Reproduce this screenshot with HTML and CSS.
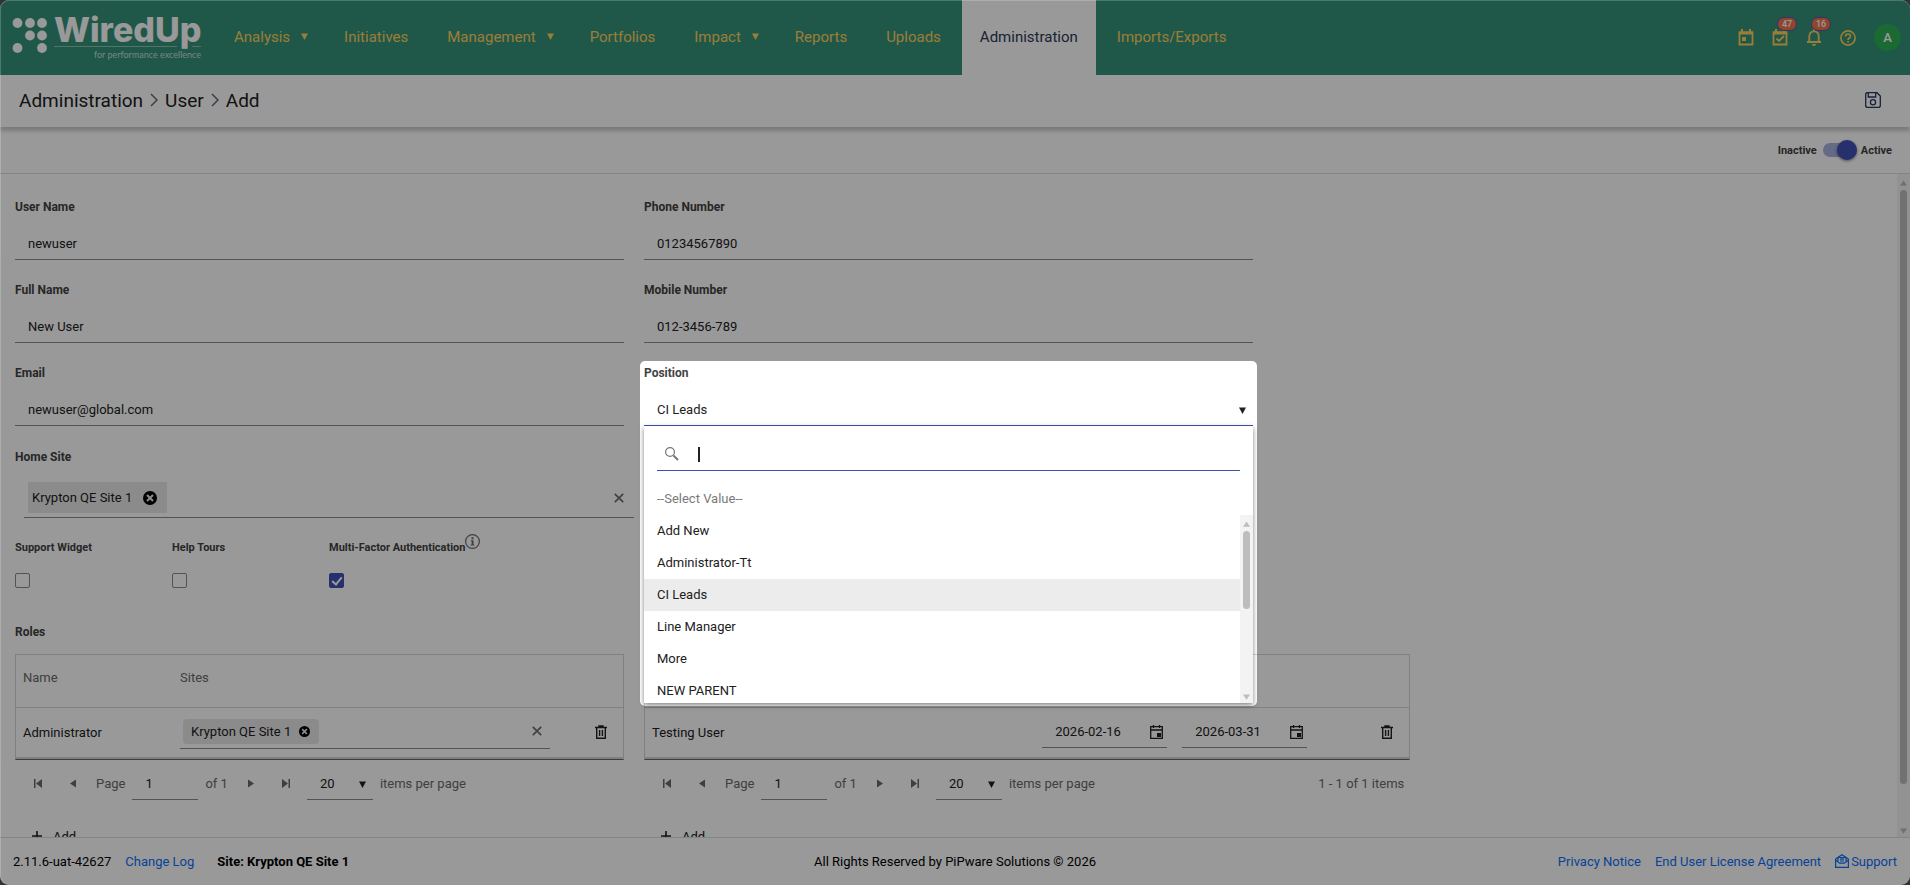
FILE: index.html
```html
<!DOCTYPE html>
<html lang="en">
<head>
  <meta charset="UTF-8">
  <meta name="viewport" content="width=device-width, initial-scale=1.0">
  <title>Administration - User - Add</title>
  <link rel="stylesheet" href="styles.css">
</head>
<body>
  <!-- shared icons -->
  <svg class="sprite" width="0" height="0" aria-hidden="true">
    <symbol id="caret" viewBox="0 0 8 8"><path d="M0 0.5h8L4 8z"/></symbol>
    <symbol id="arrow-up" viewBox="0 0 8 6"><path d="M0 6h8L4 0z"/></symbol>
    <symbol id="arrow-down" viewBox="0 0 8 6"><path d="M0 0h8L4 6z"/></symbol>
    <symbol id="chevron" viewBox="0 0 8 14"><path d="M1 1l6 6-6 6" fill="none" stroke="currentColor" stroke-width="1.5"/></symbol>
    <symbol id="cross" viewBox="0 0 10 10"><path d="M0.8 0.8l8.4 8.4M9.2 0.8L0.8 9.2" fill="none" stroke="currentColor" stroke-width="1.8"/></symbol>
    <symbol id="cross-circle" viewBox="0 0 14 14"><circle cx="7" cy="7" r="7"/><path d="M4 4l6 6M10 4l-6 6" fill="none" stroke="#ececec" stroke-width="2"/></symbol>
    <symbol id="trash" viewBox="0 0 12 14"><path d="M0 2.5h12M4 2.5V1h4v1.5M1.7 2.5v10.8h8.6V2.5M4.6 5v6M7.4 5v6" fill="none" stroke="currentColor" stroke-width="1.4"/></symbol>
    <symbol id="date" viewBox="0 0 13 14"><path d="M.7 1.7h11.6v11.6H.7zM.7 5h11.6M3.5 0v3M9.5 0v3" fill="none" stroke="currentColor" stroke-width="1.3"/><path d="M7 8h4v4H7z"/></symbol>
    <symbol id="first" viewBox="0 0 8 9"><path d="M0 0h1.5v9H0zM8 0v9L2 4.500z"/></symbol>
    <symbol id="prev" viewBox="0 0 8 9"><path d="M7 .5v8L1 4.500z"/></symbol>
    <symbol id="next" viewBox="0 0 8 9"><path d="M1 .5v8l6-4z"/></symbol>
    <symbol id="last" viewBox="0 0 8 9"><path d="M8 0H6.500v9H8zM0 0v9l6-4.500z"/></symbol>
    <symbol id="plus" viewBox="0 0 10 10"><path d="M4.200 0h1.600v4.200H10v1.600H5.800V10H4.200V5.800H0V4.200h4.200z"/></symbol>
  </svg>

  <div class="app">
    <header class="header">
      <a class="brand" href="#" aria-label="WiredUp">
        <svg width="204" height="62" viewBox="0 0 204 62">
          <g fill="#fff">
            <circle cx="17.500" cy="23" r="4.900"/><circle cx="30" cy="23" r="4.900"/><circle cx="42" cy="23" r="4.900"/>
            <circle cx="30" cy="35.500" r="4.900"/><circle cx="42" cy="35.500" r="4.900"/>
            <circle cx="17.500" cy="48" r="4.900"/><circle cx="42" cy="48" r="4.900"/>
          </g>
          <text class="brand-name" x="54" y="42">WiredUp</text>
          <path d="M54 46.500h123M192 46.500h9" stroke="#90bfb0" stroke-width="1"/>
          <text class="brand-tag" x="201" y="58" text-anchor="end">for performance excellence</text>
        </svg>
      </a>
      <nav class="nav">
        <a href="#">Analysis <svg class="nav-caret"><use href="#caret"/></svg></a>
        <a href="#">Initiatives</a>
        <a href="#">Management <svg class="nav-caret"><use href="#caret"/></svg></a>
        <a href="#">Portfolios</a>
        <a href="#">Impact <svg class="nav-caret"><use href="#caret"/></svg></a>
        <a href="#">Reports</a>
        <a href="#">Uploads</a>
        <a href="#" class="active">Administration</a>
        <a href="#">Imports/Exports</a>
      </nav>
      <div class="header-tools">
        <button type="button" class="tool" aria-label="Calendar">
          <svg width="16" height="17" viewBox="0 0 16 17"><path d="M1.500 3.500h13v12h-13z" fill="none" stroke="currentColor" stroke-width="1.800"/><path d="M1 2.500h14v3H1zM3 0h2v3H3zM11 0h2v3h-2zM4 8h4v4H4z"/></svg>
        </button>
        <button type="button" class="tool" aria-label="Tasks">
          <svg width="16" height="17" viewBox="0 0 16 17"><path d="M1.500 3.500h13v12h-13zM4.500 9.500l2.500 2.500 5-5" fill="none" stroke="currentColor" stroke-width="1.800"/><path d="M1 2.500h14v3H1zM3 0h2v3H3zM11 0h2v3h-2z"/></svg>
          <span class="badge">47</span>
        </button>
        <button type="button" class="tool" aria-label="Notifications">
          <svg width="16" height="17" viewBox="0 0 16 17"><path d="M1 13h14M3.300 13V7.500C3.300 4 5.300 2.300 8 2.300s4.700 1.700 4.700 5.200V13" fill="none" stroke="currentColor" stroke-width="1.800"/><path d="M7 0h2v2.500H7zM6 15h4a2 2 0 0 1-4 0z"/></svg>
          <span class="badge">16</span>
        </button>
        <button type="button" class="tool" aria-label="Help">
          <svg width="16" height="16" viewBox="0 0 16 16"><circle cx="8" cy="8" r="7.100" fill="none" stroke="currentColor" stroke-width="1.700"/><path d="M5.500 6.500C5.500 5 6.600 4 8 4s2.500 1 2.500 2.300C10.500 8 8 8 8 10" fill="none" stroke="currentColor" stroke-width="1.600"/><path d="M7.200 11h1.700v1.600H7.200z"/></svg>
        </button>
        <button type="button" class="avatar">A</button>
      </div>
    </header>

    <div class="breadcrumb-bar">
      <nav class="breadcrumb" aria-label="Breadcrumb">
        <a href="#">Administration</a>
        <svg><use href="#chevron"/></svg>
        <a href="#">User</a>
        <svg><use href="#chevron"/></svg>
        <a href="#">Add</a>
      </nav>
      <button type="button" class="save" aria-label="Save">
        <svg width="16" height="16" viewBox="0 0 16 16" fill="none" stroke="currentColor" stroke-width="1.300"><path d="M1.700.7H12L15.300 4v10.300l-1 1H1.700l-1-1V1.700zM3.300.700v4.300h7.400V.700"/><circle cx="8" cy="10.300" r="2.600"/></svg>
      </button>
    </div>

    <div class="status-bar">
      <label class="switch">
        <span>Inactive</span>
        <input type="checkbox" checked>
        <span>Active</span>
      </label>
    </div>

    <div class="content">
      <form class="form">
        <div class="fields">
          <div class="field">
            <label for="username">User Name</label>
            <input type="text" id="username" value="newuser">
          </div>
          <div class="field">
            <label for="phone">Phone Number</label>
            <input type="text" id="phone" value="01234567890">
          </div>
          <div class="field">
            <label for="fullname">Full Name</label>
            <input type="text" id="fullname" value="New User">
          </div>
          <div class="field">
            <label for="mobile">Mobile Number</label>
            <input type="text" id="mobile" value="012-3456-789">
          </div>
          <div class="field">
            <label for="email">Email</label>
            <input type="text" id="email" value="newuser@global.com">
          </div>
          <div class="field position-field">
            <div class="spotlight"></div>
            <label for="position">Position</label>
            <div class="select-wrap">
              <select id="position"><option>CI Leads</option></select>
              <svg class="select-caret"><use href="#caret"/></svg>
            </div>
            <div class="popup">
              <div class="search">
                <svg width="14" height="14" viewBox="0 0 14 14" fill="none" stroke="#777"><circle cx="5" cy="5" r="4.400" stroke-width="1.200"/><path d="M8.500 8.500l4.500 4.500" stroke-width="2"/></svg>
                <span class="text-cursor"></span>
                <input type="text" aria-label="Search positions">
              </div>
              <div class="option placeholder">--Select Value--</div>
              <div class="option-area">
                <ul class="options" role="listbox" aria-label="Position">
                  <li class="option" role="option">Add New</li>
                  <li class="option" role="option">Administrator-Tt</li>
                  <li class="option selected" role="option" aria-selected="true">CI Leads</li>
                  <li class="option" role="option">Line Manager</li>
                  <li class="option" role="option">More</li>
                  <li class="option" role="option">NEW PARENT</li>
                </ul>
                <div class="scrollbar popup-scrollbar" aria-hidden="true">
                  <svg><use href="#arrow-up"/></svg>
                  <div class="thumb"></div>
                  <svg><use href="#arrow-down"/></svg>
                </div>
              </div>
            </div>
          </div>
          <div class="field home-site">
            <label for="homesite">Home Site</label>
            <div class="multiselect">
              <span class="chip">Krypton QE Site 1 <button type="button" aria-label="Remove"><svg><use href="#cross-circle"/></svg></button></span>
              <input type="text" id="homesite">
              <button type="button" class="clear" aria-label="Clear"><svg><use href="#cross"/></svg></button>
            </div>
          </div>
        </div>

        <div class="checks">
          <div class="check">
            <label for="widget">Support Widget</label>
            <input type="checkbox" id="widget">
          </div>
          <div class="check">
            <label for="tours">Help Tours</label>
            <input type="checkbox" id="tours">
          </div>
          <div class="check">
            <label for="mfa">Multi-Factor Authentication<svg class="info" width="15" height="15" viewBox="0 0 15 15"><circle cx="7.500" cy="7.500" r="6.900" fill="none" stroke="currentColor" stroke-width="1.200"/><path d="M6.500 3.300h2v1.900h-2zM5.800 6.300h2.700v4.200h.9v1H5.600v-1h1V7.300h-.8z"/></svg></label>
            <input type="checkbox" id="mfa" checked>
          </div>
        </div>

        <div class="grids">
          <section class="roles">
            <h2>Roles</h2>
            <table>
              <thead>
                <tr><th class="col-name">Name</th><th>Sites</th><th class="col-action"></th></tr>
              </thead>
              <tbody>
                <tr>
                  <td>Administrator</td>
                  <td>
                    <div class="multiselect small">
                      <span class="chip">Krypton QE Site 1 <button type="button" aria-label="Remove"><svg><use href="#cross-circle"/></svg></button></span>
                      <input type="text" aria-label="Sites">
                      <button type="button" class="clear" aria-label="Clear"><svg><use href="#cross"/></svg></button>
                    </div>
                  </td>
                  <td class="col-action"><button type="button" class="delete" aria-label="Delete"><svg><use href="#trash"/></svg></button></td>
                </tr>
              </tbody>
            </table>
            <div class="pager">
              <button type="button" aria-label="First page"><svg><use href="#first"/></svg></button>
              <button type="button" aria-label="Previous page"><svg><use href="#prev"/></svg></button>
              <label class="page-label" for="page1">Page</label>
              <input type="text" id="page1" value="1">
              <span class="page-count">of 1</span>
              <button type="button" aria-label="Next page"><svg><use href="#next"/></svg></button>
              <button type="button" aria-label="Last page"><svg><use href="#last"/></svg></button>
              <div class="select-wrap">
                <select id="size1"><option>20</option></select>
                <svg class="select-caret"><use href="#caret"/></svg>
              </div>
              <label for="size1">items per page</label>
            </div>
            <button type="button" class="add"><svg><use href="#plus"/></svg> Add</button>
          </section>

          <section class="delegates">
            <table>
              <thead>
                <tr><th></th><th class="col-date"></th><th class="col-date"></th><th class="col-action"></th></tr>
              </thead>
              <tbody>
                <tr>
                  <td>Testing User</td>
                  <td class="col-date">
                    <div class="datepicker">
                      <input type="text" aria-label="Start date" value="2026-02-16">
                      <button type="button" aria-label="Pick start date"><svg><use href="#date"/></svg></button>
                    </div>
                  </td>
                  <td class="col-date">
                    <div class="datepicker">
                      <input type="text" aria-label="End date" value="2026-03-31">
                      <button type="button" aria-label="Pick end date"><svg><use href="#date"/></svg></button>
                    </div>
                  </td>
                  <td class="col-action"><button type="button" class="delete" aria-label="Delete"><svg><use href="#trash"/></svg></button></td>
                </tr>
              </tbody>
            </table>
            <div class="pager">
              <button type="button" aria-label="First page"><svg><use href="#first"/></svg></button>
              <button type="button" aria-label="Previous page"><svg><use href="#prev"/></svg></button>
              <label class="page-label" for="page2">Page</label>
              <input type="text" id="page2" value="1">
              <span class="page-count">of 1</span>
              <button type="button" aria-label="Next page"><svg><use href="#next"/></svg></button>
              <button type="button" aria-label="Last page"><svg><use href="#last"/></svg></button>
              <div class="select-wrap">
                <select id="size2"><option>20</option></select>
                <svg class="select-caret"><use href="#caret"/></svg>
              </div>
              <label for="size2">items per page</label>
              <span class="pager-info">1 - 1 of 1 items</span>
            </div>
            <button type="button" class="add"><svg><use href="#plus"/></svg> Add</button>
          </section>
        </div>
      </form>
      <div class="scrollbar" aria-hidden="true">
        <svg><use href="#arrow-up"/></svg>
        <div class="thumb"></div>
        <svg><use href="#arrow-down"/></svg>
      </div>
    </div>

    <footer class="footer">
      <div class="footer-left">
        <span>2.11.6-uat-42627</span>
        <a href="#">Change Log</a>
        <strong>Site: Krypton QE Site 1</strong>
      </div>
      <div>All Rights Reserved by PiPware Solutions © 2026</div>
      <div class="footer-right">
        <a href="#">Privacy Notice</a>
        <a href="#">End User License Agreement</a>
        <a href="#" class="support"><svg width="14" height="14" viewBox="0 0 14 14" fill="none" stroke="currentColor" stroke-width="1.200"><path d="M.6 5L7 .7 13.400 5v8.300H.6zM.6 6l4 3.200h4.800l4-3.200M3 7V3.500h8V7M5 5.200h4M5 7h4"/></svg>Support</a>
      </div>
    </footer>
  </div>
</body>
</html>
```
FILE: styles.css
```css
* {
  margin: 0;
  padding: 0;
  box-sizing: border-box;
}

body {
  font-family: Roboto, sans-serif;
  font-size: 13px;
  color: #212121;
  background-color: #55555c;
  overflow: hidden;
}

a {
  color: #0d6efd;
  text-decoration: none;
}

button,
input,
select {
  font: inherit;
  color: inherit;
  background: none;
  border: none;
  outline: none;
}

svg {
  display: block;
  flex: none;
}

svg:not([fill]) {
  fill: currentColor;
}

.sprite {
  position: absolute;
}

.app {
  display: flex;
  flex-direction: column;
  height: 100vh;
  background-color: white;
  border-radius: 9px;
  overflow: hidden;
}

/* thin light edge of the window */
.app::after {
  content: "";
  position: fixed;
  z-index: 20;
  inset: 0;
  border-top: 1px solid rgba(255, 255, 255, 0.2);
  border-left: 1px solid rgba(255, 255, 255, 0.2);
  border-radius: 9px;
  pointer-events: none;
}

/* header */
.header {
  display: flex;
  height: 75px;
  flex: none;
  background-color: #35937b;
  color: #ffd15e;
}

.brand {
  width: 214px;
}

.brand-name {
  font-family: Inter, sans-serif;
  font-size: 34px;
  font-weight: 800;
  fill: white;
}

.brand-tag {
  font-family: Lato, sans-serif;
  font-size: 9px;
  fill: #c5dfd7;
}

.nav {
  display: flex;
}

.nav a {
  display: flex;
  align-items: center;
  gap: 11px;
  padding: 0 19px 2px 20px;
  font-size: 15px;
  color: inherit;
}

.nav a.active {
  margin: 0 1px 0 2px;
  padding: 0 18px 2px;
  background-color: white;
  color: #2b3a55;
}

.nav-caret {
  width: 7px;
  height: 7px;
  margin-right: -3px;
}

.header-tools {
  display: flex;
  align-items: center;
  gap: 18px;
  margin-left: auto;
  padding-right: 9px;
}

.tool {
  position: relative;
  color: inherit;
}

.badge {
  position: absolute;
  top: -12px;
  left: 5px;
  width: 20px;
  height: 14px;
  font-size: 9px;
  font-weight: 500;
  line-height: 12px;
  text-align: center;
  color: white;
  background-color: #f0744f;
  border: 1px solid #5d51a5;
  border-radius: 7px;
}

.avatar {
  width: 27px;
  height: 27px;
  border-radius: 50%;
  background-color: #2eaf55;
  color: white;
  font-weight: 500;
}

/* title and status rows */
.breadcrumb-bar {
  display: flex;
  align-items: center;
  justify-content: space-between;
  height: 52px;
  flex: none;
  padding: 0 29px 2px 19px;
  box-shadow: 0 4px 4px rgba(0, 0, 0, 0.2);
}

.breadcrumb {
  display: flex;
  align-items: center;
  gap: 7px;
  font-size: 19px;
}

.breadcrumb a {
  color: #212121;
}

.breadcrumb svg {
  width: 8px;
  height: 14px;
  color: #667;
}

.save {
  color: #25385c;
}

.status-bar {
  display: flex;
  align-items: center;
  justify-content: flex-end;
  height: 47px;
  flex: none;
  padding-right: 18px;
  border-bottom: 1px solid #dcdcdc;
}

.switch {
  display: flex;
  align-items: center;
  gap: 10px;
  font-size: 11px;
  font-weight: 700;
  color: #424242;
}

.switch input {
  appearance: none;
  position: relative;
  width: 28px;
  height: 14px;
  margin-left: -4px;
  border-radius: 7px;
  background-color: #a9b1de;
}

.switch input::after {
  content: "";
  position: absolute;
  top: -3px;
  right: -6px;
  width: 20px;
  height: 20px;
  border-radius: 50%;
  background-color: #3f51b5;
  box-shadow: 0 1px 3px rgba(0, 0, 0, 0.5);
}

/* form */
.content {
  display: flex;
  flex: 1;
  min-height: 0;
  overflow: hidden;
}

.form {
  flex: 1;
  padding: 22px 5px 0;
}

.fields {
  display: grid;
  grid-template-columns: repeat(3, 1fr);
}

.field {
  grid-column: 1;
  padding: 0 10px 19px;
}

.field:nth-child(even) {
  grid-column: 2;
}

.field > label,
.check label,
.roles h2 {
  display: block;
  font-size: 11px;
  font-weight: 700;
  line-height: 20px;
  color: #424242;
}

.field > label {
  line-height: 22px;
}

.field > input,
.field select {
  display: block;
  width: 100%;
  height: 32px;
  margin-top: 10px;
  padding: 0 13px;
  border-bottom: 1px solid #8a8a8a;
}

select {
  appearance: none;
}

.select-wrap {
  position: relative;
}

.select-caret {
  position: absolute;
  right: 7px;
  top: 13px;
  width: 7px;
  height: 7px;
  pointer-events: none;
}

.position-field {
  position: relative;
}

.field #position {
  border-bottom-color: #3f51b5;
}

/* dims everything around the open dropdown */
.spotlight {
  position: fixed;
  z-index: 10;
  width: calc((100vw - 23px) / 3 - 12px);
  height: 345px;
  margin: -1px 0 0 -4px;
  border-radius: 5px;
  box-shadow: 0 0 0 4000px rgba(0, 0, 0, 0.4);
  pointer-events: none;
}

.popup {
  position: absolute;
  z-index: 5;
  top: 64px;
  left: 10px;
  right: 10px;
  background-color: white;
  box-shadow: 0 2px 5px rgba(0, 0, 0, 0.5);
}

.search {
  display: flex;
  align-items: center;
  height: 33px;
  margin: 12px 13px;
  padding-left: 8px;
  border-bottom: 1px solid #3f51b5;
}

.search input {
  flex: 1;
}

.text-cursor {
  width: 2px;
  height: 15px;
  margin-left: 19px;
  background-color: #212121;
}

.option {
  padding: 0 13px;
  line-height: 32px;
  list-style: none;
}

.option.placeholder {
  color: #7a7a7a;
}

.option.selected {
  background-color: #ececec;
}

.option-area {
  display: flex;
  height: 188px;
}

.options {
  flex: 1;
  overflow: hidden;
}

.scrollbar {
  display: flex;
  flex-direction: column;
  align-items: center;
  width: 13px;
  padding: 6px 0 3px;
  background-color: #f3f3f3;
  color: #bdbdbd;
}

.scrollbar svg {
  width: 7px;
  height: 6px;
}

.scrollbar .thumb {
  flex: 1;
  width: 7px;
  margin: 4px 0 44px;
  border-radius: 4px;
  background-color: #bdbdbd;
}

.popup-scrollbar .thumb {
  margin-bottom: 85px;
}

.home-site {
  padding-top: 1px;
}

.multiselect {
  display: flex;
  align-items: center;
  height: 36px;
  margin: 14px -10px 0 9px;
  padding: 0 10px 4px 4px;
  border-bottom: 1px solid #8a8a8a;
}

.multiselect input {
  flex: 1;
  min-width: 0;
}

.chip {
  display: flex;
  align-items: center;
  gap: 11px;
  height: 31px;
  padding: 0 10px 0 4px;
  background-color: #e8e8e8;
}

.chip svg {
  width: 14px;
  height: 14px;
  color: black;
}

.clear svg {
  width: 10px;
  height: 10px;
  color: #707070;
}

.checks {
  display: flex;
  padding: 1px 10px 34px;
}

.check {
  width: 157px;
  white-space: nowrap;
}

.check label {
  height: 20px;
}

.check input {
  display: block;
  appearance: none;
  width: 15px;
  height: 15px;
  margin-top: 15px;
  border: 1px solid #8a8a8a;
  border-radius: 2px;
}

.check input:checked {
  background-color: #3f51b5;
  border-color: #3f51b5;
}

.check input:checked::after {
  content: "";
  display: block;
  width: 4px;
  height: 8px;
  margin: 1px 0 0 4px;
  border: solid white;
  border-width: 0 2px 2px 0;
  transform: rotate(40deg);
}

.info {
  position: absolute;
  display: inline;
  margin-top: -4px;
  color: #6a6a6a;
}

/* grids */
.grids {
  display: grid;
  grid-template-columns: 4fr 5fr 3fr;
  align-items: end;
}

.grids section {
  padding: 0 10px;
}

.roles h2 {
  margin-bottom: 12px;
}

.field > label,
.roles h2 {
  font-size: 12px;
}

table {
  width: 100%;
  table-layout: fixed;
  border-collapse: separate;
  border-spacing: 0;
  border: 1px solid #d5d5d5;
  border-bottom: 1px solid #666;
  box-shadow: inset 0 -2px #d5d5d5;
}

th {
  height: 53px;
  padding: 0 8px 8px 7px;
  border-bottom: 1px solid #d5d5d5;
  font-weight: 400;
  text-align: left;
  color: #6a6a6a;
}

td {
  height: 51px;
  padding: 0 8px 3px 7px;
}

.col-name {
  width: 157px;
}

.col-date {
  width: 140px;
}

.roles th.col-action {
  width: 58px;
}

.roles td.col-action {
  padding-left: 30px;
}

.delegates th.col-action {
  width: 94px;
}

.delegates td.col-action {
  padding-left: 66px;
}

.delete {
  display: block;
}

.delete svg {
  width: 12px;
  height: 14px;
}

.multiselect.small {
  height: 31px;
  margin: 3px 7px 0 0;
  padding: 0 8px 4px 3px;
}

.small .chip {
  gap: 8px;
  height: 25px;
  padding: 0 9px 0 8px;
  border-radius: 4px;
}

.small .chip svg {
  width: 11px;
  height: 11px;
}

.datepicker {
  display: flex;
  align-items: center;
  height: 32px;
  padding: 0 4px 0 13px;
  border-bottom: 1px solid #8a8a8a;
}

.datepicker input {
  flex: 1;
  min-width: 0;
}

.datepicker svg {
  width: 13px;
  height: 14px;
}

.pager {
  display: flex;
  align-items: center;
  gap: 7px;
  height: 47px;
  padding: 0 6px 0 9px;
  color: #6a6a6a;
}

.pager button {
  display: flex;
  justify-content: center;
  width: 28px;
}

.pager button svg {
  width: 8px;
  height: 9px;
}

.pager input,
.pager select {
  width: 66px;
  height: 32px;
  padding: 0 13px;
  border-bottom: 1px solid #8a8a8a;
  color: #212121;
}

.pager .select-caret {
  color: #212121;
}

.page-label,
.page-count {
  margin-left: 2px;
}

.page-count {
  margin-left: 0;
  margin-right: 2px;
}

.pager-info {
  margin-left: auto;
}

.add {
  display: flex;
  align-items: center;
  gap: 11px;
  height: 32px;
  margin-top: 13px;
  padding-left: 17px;
}

.add svg {
  width: 10px;
  height: 10px;
}

/* footer */
.footer {
  display: grid;
  grid-template-columns: 1fr auto 1fr;
  align-items: center;
  height: 48px;
  flex: none;
  padding: 0 13px;
  border-top: 1px solid #dcdcdc;
  color: black;
}

.footer-left {
  display: flex;
  gap: 14px;
}

.footer-left strong {
  margin-left: 9px;
}

.footer-right {
  display: flex;
  justify-content: flex-end;
  gap: 14px;
}

.support {
  display: flex;
  gap: 2px;
}
```
